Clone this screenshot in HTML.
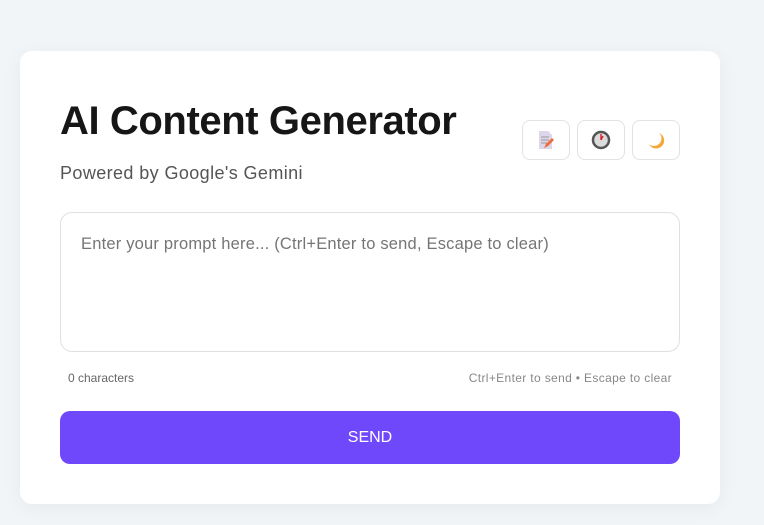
<!DOCTYPE html><html><head><style>
body{margin:0;width:764px;height:525px;background:#f2f5f8;font-family:"Liberation Sans",sans-serif;position:relative;overflow:hidden}
.card{position:absolute;left:20px;top:51px;width:700px;height:453px;background:#fff;border-radius:12px;box-shadow:0 4px 20px rgba(0,0,0,.05)}
h1{position:absolute;left:60px;top:99px;margin:0;font-size:40px;font-weight:bold;color:#161616;letter-spacing:-0.4px}
.sub{position:absolute;left:60px;top:163px;font-size:18px;letter-spacing:0.4px;color:#555}
.b{position:absolute;top:120px;width:46px;height:38px;border:1px solid #e2e2e2;border-radius:8px;background:#fff;display:flex;align-items:center;justify-content:center}
.ta{position:absolute;left:60px;top:212px;width:618px;height:138px;border:1px solid #e0e0e0;border-radius:12px}
.ph{position:absolute;left:81px;top:235px;font-size:16.5px;letter-spacing:0.2px;color:#757575}
.s{position:absolute;top:371px;font-size:12px;color:#666}
.send{position:absolute;left:60px;top:411px;width:620px;height:53px;background:#7048fc;border-radius:10px;color:#fff;font-size:16px;display:flex;align-items:center;justify-content:center}
</style></head><body>
<div class="card"></div>
<h1>AI Content Generator</h1>
<div class="sub">Powered by Google's Gemini</div>
<div class="b" style="left:522px"><svg width="20" height="20" viewBox="0 0 20 20"><path d="M3 1h9l4 4v14H3z" fill="#ddd6ea"/><path d="M5 7h8M5 10h8M5 13h6" stroke="#999" stroke-width="1"/><path d="M8 18l2-4 6-6 2 2-6 6z" fill="#f06a3c"/></svg></div>
<div class="b" style="left:577px"><svg width="20" height="20" viewBox="0 0 20 20"><circle cx="10" cy="10" r="8" fill="#dcdcdc" stroke="#555" stroke-width="2.5"/><path d="M10 10V4M10 10l2-4" stroke="#d12" stroke-width="1.3"/></svg></div>
<div class="b" style="left:632px"><svg width="20" height="20" viewBox="0 0 20 20"><path d="M13 3A8 8 0 1 1 3 14A7 7 0 0 0 13 3z" fill="#f3a83a"/></svg></div>
<div class="ta"></div>
<div class="ph">Enter your prompt here... (Ctrl+Enter to send, Escape to clear)</div>
<div class="s" style="left:68px">0 characters</div>
<div class="s" style="right:92px;color:#888;letter-spacing:0.35px">Ctrl+Enter to send • Escape to clear</div>
<div class="send">SEND</div>
</body></html>
